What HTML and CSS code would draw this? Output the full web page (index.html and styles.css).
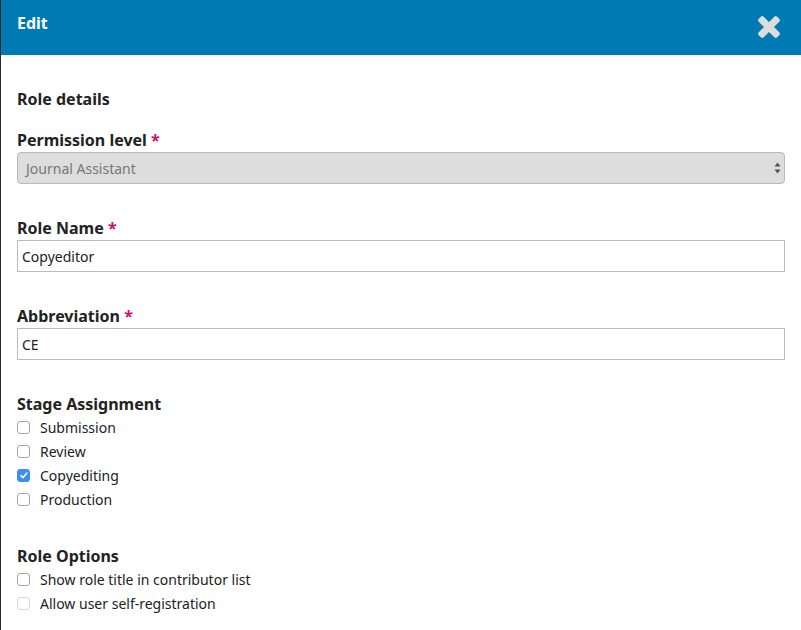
FILE: index.html
```html
<!DOCTYPE html>
<html>
<head>
<meta charset="utf-8">
<link rel="stylesheet" href="styles.css">
</head>
<body>
<div class="modal">
  <div class="modal-header">
    <h1 class="title">Edit</h1>
    <button class="close" aria-label="Close">
      <svg width="22" height="22" viewBox="0 0 22 22">
        <g fill="#dddddd">
          <rect x="-2" y="7.5" width="26" height="7" rx="2" transform="rotate(45 11 11)"/>
          <rect x="-2" y="7.5" width="26" height="7" rx="2" transform="rotate(-45 11 11)"/>
        </g>
      </svg>
    </button>
  </div>
  <div class="modal-body">
    <h2 class="section-title">Role details</h2>

    <div class="field">
      <label class="label">Permission level <span class="req">*</span></label>
      <div class="select">
        <span class="select-value">Journal Assistant</span>
        <span class="arrows">
          <svg width="7" height="12" viewBox="0 0 7 12"><path d="M3.5 0.5 L6.5 4.5 H0.5 Z M0.5 7.5 H6.5 L3.5 11.5 Z" fill="#555"/></svg>
        </span>
      </div>
    </div>

    <div class="field">
      <label class="label">Role Name <span class="req">*</span></label>
      <div class="input">Copyeditor</div>
    </div>

    <div class="field">
      <label class="label">Abbreviation <span class="req">*</span></label>
      <div class="input">CE</div>
    </div>

    <div class="field">
      <div class="label">Stage Assignment</div>
      <ul class="checks">
        <li><span class="box"></span>Submission</li>
        <li><span class="box"></span>Review</li>
        <li><span class="box checked"><svg width="8" height="7" viewBox="0 0 8 7"><path d="M1 3.6 L3 5.6 L7 1" fill="none" stroke="#fff" stroke-width="1.6" stroke-linecap="round" stroke-linejoin="round"/></svg></span>Copyediting</li>
        <li><span class="box"></span>Production</li>
      </ul>
    </div>

    <div class="field options">
      <div class="label">Role Options</div>
      <ul class="checks">
        <li><span class="box"></span>Show role title in contributor list</li>
        <li><span class="box disabled"></span>Allow user self-registration</li>
      </ul>
    </div>
  </div>
</div>
</body>
</html>
```

FILE: styles.css
```css
html, body {
  margin: 0;
  padding: 0;
  height: 100%;
}
body {
  background: #2a2a2a;
  font-family: "Noto Sans", "Open Sans", sans-serif;
  color: #222;
  overflow: hidden;
}
.modal {
  margin-left: 1px;
  background: #fff;
  min-height: 100%;
}
.modal-header {
  height: 55px;
  background: #007ab2;
  display: flex;
  align-items: center;
  justify-content: space-between;
  padding: 0 21px 0 16px;
  box-sizing: border-box;
}
.title {
  margin: 0;
  margin-top: -9px;
  color: #fff;
  font-size: 16px;
  line-height: 20px;
  font-weight: 700;
}
.close {
  background: none;
  border: 0;
  padding: 0;
  width: 22px;
  height: 22px;
  display: block;
  margin-top: -1px;
}
.close svg { display: block; }
.modal-body {
  padding: 34px 16px 0 16px;
}
.section-title {
  margin: 0;
  font-size: 16px;
  line-height: 20px;
  font-weight: 700;
  color: #222;
}
.field {
  margin-top: 21px;
}
.field + .field {
  margin-top: 34px;
}
.label {
  display: block;
  font-size: 16px;
  line-height: 20px;
  font-weight: 700;
  color: #222;
  margin-bottom: 2px;
}
.req {
  color: #d00a6c;
}
.select {
  height: 32px;
  box-sizing: border-box;
  background: #ddd;
  border: 1px solid #bbb;
  border-radius: 4px;
  display: flex;
  align-items: center;
  justify-content: space-between;
  padding: 0 3px 0 8px;
  font-size: 14px;
  color: #777;
}
.arrows svg { display: block; }
.input {
  height: 32px;
  box-sizing: border-box;
  border: 1px solid #bbb;
  display: flex;
  align-items: center;
  padding: 0 4px;
  font-size: 14px;
  color: #222;
}
.checks {
  list-style: none;
  margin: -1px 0 0 0;
  padding: 0;
}
.checks li {
  height: 24px;
  display: flex;
  align-items: center;
  font-size: 14px;
  color: #222;
}
.box {
  width: 11px;
  height: 11px;
  border: 1px solid #a6a6a6;
  border-radius: 3px;
  background: #fff;
  margin-right: 10px;
  display: flex;
  align-items: center;
  justify-content: center;
  flex: none;
}
.box.checked {
  background: #3b8ef5;
  border-color: #3b8ef5;
}
.box.disabled {
  border-color: #d8d8d8;
}
.field.options {
  margin-top: 35px;
}
```
